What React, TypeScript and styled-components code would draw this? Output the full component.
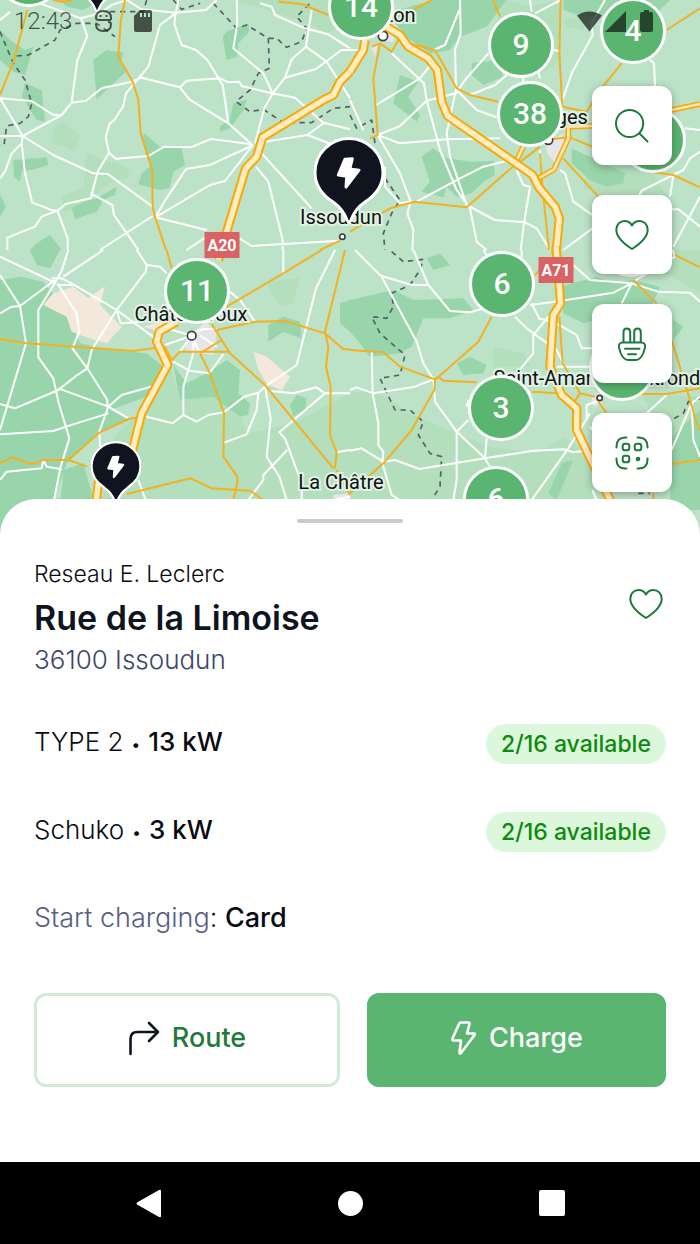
import React from "react";
import styled, { createGlobalStyle, css } from "styled-components";

const color = {
  ink: "#10141f",
  navy: "#3c4668",
  slate: "#56607f",
  green: "#5ab570",
  deepGreen: "#1f7a3a",
  paleGreen: "#d0ebd7",
  pill: "#dcf7dc",
  pillText: "#0d8a0d",
  land: "#bce3c7",
  forest: "#98d5ab",
  meadow: "#b3dfbc",
  sand: "#f4e8dc",
  town: "#e6e5ea",
  road: "#f9a905",
};

const GlobalStyle = createGlobalStyle`
  *, *::before, *::after { box-sizing: border-box; }
  body {
    margin: 0;
    background: #ffffff;
    color: #0a0b10;
    font-family: Inter, "Liberation Sans", sans-serif;
  }
  button {
    margin: 0;
    padding: 0;
    border: 0;
    background: none;
    font: inherit;
    color: inherit;
    cursor: pointer;
  }
  svg { display: block; }
`;

const Screen = styled.div`
  display: flex;
  flex-direction: column;
  min-height: 100vh;
`;

/* ---------- Map ---------- */

const MapArea = styled.section`
  position: relative;
  height: 539px;
  overflow: hidden;
  background: ${color.land};
  display: flex;
  justify-content: flex-end;
  align-items: flex-start;
  padding: 86px 28px 0;
`;

const Terrain = styled.svg`
  position: absolute;
  inset: 0;
  width: 100%;
  height: 100%;
`;

interface Spot {
  x: number;
  y: number;
}

const onMap = css<{ $x: number; $y: number }>`
  position: absolute;
  left: ${(p) => p.$x / 7}%;
  top: ${(p) => p.$y}px;
`;

const PlaceLabel = styled.span<{ $x: number; $y: number }>`
  ${onMap}
  transform: translate(-50%, -50%);
  font: 400 20px/24px Roboto, "Liberation Sans", sans-serif;
  white-space: nowrap;
  color: #111411;
  -webkit-text-stroke: 4px #e1f2e5;
  paint-order: stroke fill;
`;

const RoadBadge = styled.span<{ $x: number; $y: number }>`
  ${onMap}
  transform: translate(-50%, -50%);
  width: 35px;
  height: 26px;
  background: #d96264;
  color: #ffffff;
  font: 700 16px/27px Roboto, "Liberation Sans", sans-serif;
  text-align: center;
`;

const Cluster = styled.button<{ $x: number; $y: number }>`
  ${onMap}
  transform: translate(-50%, -50%);
  width: 66px;
  height: 66px;
  border: 3px solid #ffffff;
  border-radius: 50%;
  background: ${color.green};
  color: #ffffff;
  font: 500 30px/60px Roboto, "Liberation Sans", sans-serif;
  text-align: center;
`;

const PinButton = styled.button<{ $x: number; $y: number; $width: number }>`
  ${onMap}
  transform: translate(-50%, -100%);
  width: ${(p) => p.$width}px;
`;

const PinDrawing = styled.svg`
  width: 100%;
  height: auto;
`;

const clusters: (Spot & { count: string })[] = [
  { x: 29, y: -26, count: "" },
  { x: 361, y: 7, count: "14" },
  { x: 521, y: 45, count: "9" },
  { x: 530, y: 114, count: "38" },
  { x: 633, y: 31, count: "4" },
  { x: 653, y: 140, count: "" },
  { x: 631, y: 244, count: "" },
  { x: 622, y: 368, count: "" },
  { x: 197, y: 291, count: "11" },
  { x: 502, y: 284, count: "6" },
  { x: 501, y: 408, count: "3" },
  { x: 496, y: 499, count: "6" },
];

const places: (Spot & { name: string })[] = [
  { x: 382, y: 15, name: "Vierzon" },
  { x: 551, y: 117, name: "Bourges" },
  { x: 341, y: 217, name: "Issoudun" },
  { x: 191, y: 314, name: "Châteauroux" },
  { x: 597, y: 378, name: "Saint-Amand-Montrond" },
  { x: 341, y: 482, name: "La Châtre" },
];

const pins: (Spot & { width: number })[] = [
  { x: 97, y: 14, width: 51 },
  { x: 349, y: 226, width: 71 },
  { x: 116, y: 505, width: 51 },
];

/* The terrain is split in four tiles of 1050 x 750 units, three units per pixel. */
interface Tile {
  x: number;
  y: number;
  forest: string;
  meadow: string;
  sand?: string;
  town?: string;
  minor: string;
  major: string;
  motorway: string;
  link?: string;
  border: string;
}

const tiles: Tile[] = [
  {
    x: 0,
    y: 0,
    forest:
      "M0 90L30 120 75 150 100 140 75 225 40 215 0 180ZM75 250L125 270 135 365 110 360 65 290ZM280 180L320 150 370 158 362 190 383 210 290 298ZM680 95L745 70 748 95 715 130 712 170 680 180 668 110ZM700 310L740 300 730 330 690 385 660 395 660 380 690 355ZM432 400L480 440 545 445 555 495 520 515 508 565 480 570 415 553 425 520 450 500 425 420ZM40 480L140 472 145 495 95 510 65 512 60 545 42 530ZM215 625L250 605 290 595 350 560 345 585 310 600 290 635 225 658ZM0 585L18 620 0 650ZM110 730L150 705 185 750H90ZM180 0H300L250 30 200 20Z",
    meadow:
      "M160 380L190 362 240 410 225 455 190 440 155 430ZM260 460L380 500 390 530 330 550 260 600 190 640 185 590 250 560ZM700 0H1050V60L980 100 900 60Z",
    minor:
      "M0 295L95 303 160 345 185 345 215 308 258 302 305 265 395 245 425 233 540 262 560 242 660 235 685 247 718 245 725 258 815 280 885 293 970 368 1050 388M0 295L68 408 185 345M0 408H68L160 465 280 520 323 522 458 620M68 408L65 430 35 460 15 515 0 535M65 430L75 520 97 608 155 630 172 632 203 715V750M172 632L197 612 272 595 293 515 327 458 317 412 328 372 345 358 370 318 378 280 445 200 480 75 527 40M327 458L348 476 445 468 493 440 572 442 633 417 755 433M215 308L232 180 262 108 243 55 120 10M243 55L300 40 335 15 380 0M272 580L337 615 342 645 415 750M172 632L125 650 105 680 22 713V750M300 750L458 648M466 652L493 605 558 507 630 495 760 435M466 652L630 555 675 543 755 440M466 652L620 690M540 262L568 298 685 370 755 433M685 370L668 255 622 180 588 150 545 135 523 72 527 40 535 0M380 0L425 28 527 38 618 30 650 0M710 0L712 70 700 145 790 220 818 280 793 325 765 430M780 10L815 20 825 45 915 85 985 103 1050 145M935 30L918 140 875 178 855 233 818 280M855 233L948 207 1025 150H1050M918 140L980 185 1050 295M795 425L922 405 970 370M922 405L1000 435M785 460L935 625M768 500L805 545 848 720V750M718 715L755 738 1020 722M560 750L620 710M0 60L30 35",
    major:
      "M82 30L40 185 0 285M375 0L362 65 355 170 398 245 415 298 422 400 457 510 458 620 465 650 498 750M835 5L905 12 985 45M960 750L1020 722M160 0L185 5 220 0",
    motorway: "M1050 215L1020 245 1000 285 970 300 788 412 770 470 737 505 680 695 660 760",
    border:
      "M0 95L40 190 75 240 95 310 85 350 60 370 20 378 12 435H0M50 168L85 165 165 120 180 90 230 70H290L345 110M330 35H430L440 0M520 0L545 28 600 10M640 10L710 85 740 75 805 115 808 205 775 220 750 270 708 305 750 335 790 328 850 368 935 368 1000 325 1050 320M805 115L830 115 860 142 905 125 920 85 890 50 930 10",
  },
  {
    x: 1050,
    y: 0,
    forest:
      "M110 40L250 0H470L440 40 410 80 330 110 300 150 240 160 180 120ZM640 0H960L930 30 880 25 800 10 760 45 700 50 640 30ZM150 225L205 245 175 290 210 345 200 365 130 310ZM365 190L440 180 460 230 400 255 365 225ZM215 470L250 445 290 475 365 485 430 482 435 525 400 545 365 580 320 590 290 560 280 592 215 575 240 545ZM665 445L740 480 825 520 820 550 770 560 720 540 665 490Z",
    meadow:
      "M470 0L540 20 632 0V180L560 230 440 210 410 120ZM640 60L720 45 700 90 650 80ZM750 350L840 420 960 600 850 640 700 560Z",
    town: "M590 430L640 400 640 460 615 490 590 460ZM62 140L85 130 75 170ZM85 70L140 75 130 125 95 125Z",
    minor:
      "M330 0L332 100 315 150 318 268 290 400 300 470 350 615 435 660 525 667 560 685 600 750M250 150L285 135 328 30M125 160L222 250 230 300 270 450 320 570 360 625 380 725 410 750M78 315L210 235 250 185M83 405L150 378 230 302 318 280 345 240 415 160M318 268L380 330 440 352M360 285L435 255 470 225M83 405L150 430 290 418 450 415M83 405L150 520 182 605 172 640 190 690 187 750M200 605L330 535 400 500 500 475M0 150H45M540 0L545 35M555 40L632 0M637 300L665 220 728 105 725 70 765 0M610 150L628 153M900 180L912 190 915 258M570 235L565 215M570 450L572 495M630 510L645 520 670 605 727 645M500 510L520 555 540 560 522 670 512 750M640 750L727 685M1050 455L1020 475 1000 510 970 525 875 572 865 590M970 525L960 590M1050 390L1005 385M965 628H985L1050 680M1050 590L970 740M0 300L40 390M105 500V560L150 610 182 605M520 235V250",
    major:
      "M65 140L90 130 70 235 83 405 60 415M150 110L125 155 90 130M175 130L255 150 320 265 360 285 445 305M190 30L245 0M430 0L450 50M632 0L628 160 637 320 710 335 760 258 815 190M660 412L727 440M570 460L578 570 597 750M640 475L745 590M505 490L570 440M500 490L350 622 195 605 120 625 0 695M950 90L1050 25M900 515L970 525 1050 562M590 420L650 412",
    motorway:
      "M45 120L40 150 0 215M110 80L150 105 175 140 235 175 262 210 275 305 293 348 548 525 565 560 615 620 628 655 618 760",
    link: "M500 480L520 440M565 535L612 508 655 415V380L727 378M965 330L1050 312",
    border: "M0 345L20 385 65 360 75 430M105 535L150 600 125 640 100 700 105 750",
  },
  {
    x: 0,
    y: 750,
    forest:
      "M90 0H180L150 55 110 45ZM0 90L60 80 130 95 200 180 240 280 330 300 440 310 490 350 440 440 330 480 390 510 300 545 200 640 150 780H0ZM190 660L250 640 290 780H180ZM520 345L560 400 620 370 680 330 720 360 715 430 750 460 745 495 720 500 640 440 540 450ZM805 225L850 200 900 215 905 265 850 245 805 275ZM870 465L890 435 920 445 915 480 880 500ZM1020 160L1050 150V245L1020 220Z",
    meadow:
      "M510 345L540 450 640 440 720 500 740 550 880 520 1050 430V780H300L340 560 430 480ZM800 100L900 80 880 160 840 170Z",
    sand: "M160 130L220 110 265 145 315 108 300 165 365 232 320 280 260 262 215 245 200 200 130 165ZM760 305L800 320 870 380 845 422 800 400 775 360ZM430 230L480 215 520 215 480 245Z",
    town: "M560 260L620 215 650 250 640 315 600 310 555 300ZM1000 735L1050 730V760H1000Z",
    minor:
      "M0 20L165 98 185 62 205 0M165 90L60 168 35 170 0 190M0 75L60 168 78 280 0 540M155 85H185L220 103 350 180 462 262M172 105H220M190 80L310 0M410 0L440 45 437 65 350 180 362 220 430 215M440 45L480 50 500 70M172 100L230 190 238 245 217 295 262 355 322 450V470M165 98L115 180V322L160 385 175 455 208 565 182 650 162 750M262 355L275 300 350 180M262 355L225 380 175 420 45 475 0 462M175 415L325 470 385 505M325 470L365 435 460 408M325 490L198 530 160 543 0 553M325 470L298 545 300 590M0 690L20 665 125 655 130 630 140 650 185 658M415 690L437 750M440 500L518 520 550 495 590 515 625 495 672 487 732 440 775 428 795 410 890 345 948 115 1005 0M550 495V410L565 360 580 310V270M520 335L568 362 628 370 670 312M775 428L770 480 740 553 672 578M795 410L812 505 800 620 838 680 860 750M805 422L880 430 950 412 975 430H1050M975 430L838 547 855 565 905 700V750M862 600L790 675V690L745 750M1050 600L1010 607M850 0V75M690 125L720 150 765 215M575 257L500 235M575 257L495 285M575 257L540 305M575 257L600 310M600 257L650 290M590 245L610 237H650M1010 747L1050 740",
    major:
      "M0 267L80 280 400 303 470 293 495 290 515 330 540 305H690M500 0L515 55M0 640L35 622 95 642 130 630H205L300 547 385 507 410 503M205 630L262 650M680 170L850 70 965 0M650 240L765 215 855 213 975 250 1030 298H1050M1035 0L975 245 985 290 978 350 992 410 990 555 1010 607 1005 655M635 222L665 270 690 310 795 405 1000 655M600 310L665 270M600 310L630 370 672 490 670 620 712 680V700L700 750M380 732L572 685 635 715 750 722 790 750M1010 660L1050 735",
    motorway: "M665 0L655 30M530 215L478 245 470 275 503 345 425 490 395 610M300 660L285 780",
    border: "",
  },
  {
    x: 1050,
    y: 750,
    forest:
      "M0 150L130 120 190 150 340 145 370 180 300 205 220 205 185 290 150 310 60 320 30 280 0 245ZM630 110L740 80 790 100 850 90 930 110 900 180 830 215 780 200 700 220 640 190ZM320 340L360 320 410 345 400 370 340 375ZM635 640L670 630 620 750 595 730ZM965 560L1050 480V780H960ZM230 25L270 10 300 45 250 60ZM970 210L1000 230 970 270Z",
    meadow:
      "M0 430L70 420 200 500 320 550 420 590 560 610 640 560 727 620V780H0ZM740 0H1050V130L930 60ZM430 290L520 310 545 350 430 350ZM870 430L1050 440V560L960 570Z",
    town: "M725 440L760 425 755 460 730 470Z",
    minor:
      "M15 0L95 80 200 275 220 340 250 388 195 410 70 430 20 412 0 420M65 303L68 430 85 520V585L100 605 97 640 125 735 150 750M95 78L185 105H235M190 0L235 105 300 183 360 187 400 175M250 388L255 455 320 545 405 625 550 602 645 598 670 607 725 600M0 602L35 595 100 635 135 630 208 657 405 625M320 545L355 510M320 545V690L310 750M405 625L410 565M405 625L420 650M350 470L355 450M545 750L655 595 720 490M495 200L530 235 620 300 640 340M565 205L610 215 680 255 695 295H727M540 165L615 155 790 128 845 100 925 125 1020 128 1050 155M545 160L570 210M845 100L815 160M845 100L720 90 670 45M550 310V255L595 200M550 310L500 370M620 350H720M400 0L410 15M515 0V20M968 0L975 20 850 95M950 435L890 490M1050 440L1025 460 965 600M1025 460L1030 570 1050 620M710 510V465L750 450M740 750L727 720M720 530L727 540",
    major:
      "M425 200L385 275 255 390 253 420 185 540 105 635 0 730M0 300L100 307 150 350 255 388 265 380 280 392 380 397M545 425L620 430M570 60L555 75M628 200L638 340 690 430 735 440M670 460L690 430M745 455L770 490M975 15L1050 52M850 90L920 160M965 270L1020 450 1040 520 1050 540M860 432H950L1050 415M965 642L1050 630M910 730V750",
    motorway: "M618 -10L632 160 610 195 600 350 635 435 680 475V540L790 770",
    border:
      "M125 5L160 35 220 28 210 60 180 105 125 130 130 170 110 205 65 200 90 250 165 315 150 375 90 385 135 480 180 480 220 515 205 555 240 610 275 620 270 710 245 750M1050 445L1015 455 1000 490 965 510M865 730H900",
  },
];

const townMarks: { x: number; y: number; r: number }[] = [
  { x: 575, y: 1007, r: 13 },
  { x: 1027, y: 710, r: 8 },
  { x: 1799, y: 1194, r: 8 },
  { x: 1149, y: 108, r: 14 },
  { x: 1645, y: 420, r: 13 },
];

const MapTerrain = () => (
  <Terrain viewBox="0 0 2100 1617" preserveAspectRatio="none" aria-hidden="true">
    {tiles.map((t) => (
      <g key={`land-${t.x}-${t.y}`} transform={`translate(${t.x} ${t.y})`}>
        <path d={t.meadow} fill={color.meadow} />
        <path d={t.forest} fill={color.forest} />
        {t.sand && <path d={t.sand} fill={color.sand} />}
        {t.town && <path d={t.town} fill={color.town} />}
      </g>
    ))}
    <rect x="0" y="1495" width="300" height="122" fill={color.forest} />
    {tiles.map((t) => (
      <g
        key={`road-${t.x}-${t.y}`}
        transform={`translate(${t.x} ${t.y})`}
        fill="none"
        strokeLinejoin="round"
      >
        <path d={t.border} stroke="#566069" strokeWidth="5" strokeDasharray="16 14" />
        <path d={t.minor} stroke="#ffffff" strokeWidth="6" />
        <path d={t.major} stroke="#f3b020" strokeWidth="6" />
        {t.link && <path d={t.link} stroke={color.road} strokeWidth="17" />}
        {t.link && <path d={t.link} stroke="#ffe6b0" strokeWidth="8" />}
        <path d={t.motorway} stroke={color.road} strokeWidth="28" />
        <path d={t.motorway} stroke="#ffecc0" strokeWidth="16" />
      </g>
    ))}
    {townMarks.map((m) => (
      <circle
        key={`${m.x}-${m.y}`}
        cx={m.x}
        cy={m.y}
        r={m.r}
        fill="#ffffff"
        stroke="#3a3d3b"
        strokeWidth="5"
      />
    ))}
  </Terrain>
);

const Pin = ({ x, y, width }: Spot & { width: number }) => (
  <PinButton $x={x} $y={y} $width={width} aria-label="Charging station">
    <PinDrawing viewBox="0 0 71 89">
      <path
        d="M35.500 1.500a34 34 0 0 1 34 34c0 14-8 23-18 29.500C45 69.500 40 76 37.500 83c-1 2.500-3 2.500-4 0C31 76 26 69.500 19.500 65c-10-6.500-18-15.500-18-29.500a34 34 0 0 1 34-34z"
        fill={color.ink}
        stroke="#ffffff"
        strokeWidth="3"
      />
      <path
        d="M31.500 22.200L38.800 21.800 36.300 32 45.500 33.200 32.500 50 33.200 39.300 24.800 38Z"
        fill="#ffffff"
        stroke="#ffffff"
        strokeWidth="3"
        strokeLinejoin="round"
      />
    </PinDrawing>
  </PinButton>
);

/* ---------- Status bar ---------- */

const StatusBar = styled.header`
  position: absolute;
  top: 0;
  left: 0;
  right: 0;
  height: 42px;
  padding: 0 47px 0 14px;
  display: flex;
  align-items: center;
  justify-content: space-between;
  color: #101612;
  opacity: 0.7;
  pointer-events: none;
`;

const StatusGroup = styled.div<{ $gap: number }>`
  display: flex;
  align-items: center;
  gap: ${(p) => p.$gap}px;
`;

const Clock = styled.time`
  font: 300 24px/28px Roboto, "Liberation Sans", sans-serif;
`;

/* ---------- Floating buttons ---------- */

const ToolColumn = styled.nav`
  position: relative;
  display: flex;
  flex-direction: column;
  gap: 30px;
`;

const ToolButton = styled.button`
  width: 80px;
  height: 79px;
  display: grid;
  place-items: center;
  border-radius: 12px;
  background: #ffffff;
  color: ${color.deepGreen};
  box-shadow: 0 2px 8px rgba(0, 0, 0, 0.3);
`;

const LineIcon = styled.svg`
  fill: none;
  stroke: currentColor;
  stroke-width: 2;
  stroke-linecap: round;
  stroke-linejoin: round;
`;

const HeartIcon = () => (
  <LineIcon width="36" height="36" viewBox="0 0 36 36">
    <path d="M18 32C8 25.500 2.300 19.500 2.300 12.700 2.300 7.500 6 4 10.600 4 13.700 4 16.200 5.200 18 8.400 19.800 5.200 22.300 4 25.400 4 30 4 33.700 7.500 33.700 12.700 33.700 19.500 28 25.500 18 32Z" />
  </LineIcon>
);

const SearchIcon = () => (
  <LineIcon width="36" height="36" viewBox="0 0 36 36">
    <circle cx="15.600" cy="15.500" r="13.600" />
    <path d="M25.500 25.500L33.500 33.500" />
  </LineIcon>
);

const PlugIcon = () => (
  <LineIcon width="36" height="36" viewBox="0 0 36 36">
    <path d="M9.500 16V6Q9.500 2.500 12.800 2.500T16.200 6V16M20.200 16V6Q20.200 2.500 23.500 2.500T26.800 6V16" />
    <path d="M8.500 16.500H27.500Q31.800 17 31 21.500L29.300 27Q26.500 34 21.500 34H14.500Q9.500 34 6.700 27L5 21.500Q4.200 17 8.500 16.500ZM11 22.800H25.500M14 28.200H22" />
  </LineIcon>
);

const ScanIcon = () => (
  <LineIcon width="36" height="36" viewBox="0 0 36 36">
    <path d="M2.500 12.500V11.500Q2.500 2.500 11.500 2.500H12.500M23.500 2.500H24.500Q33.500 2.500 33.500 11.500V12.500M33.500 23.500V24.500Q33.500 33.500 24.500 33.500H23.500M12.500 33.500H11.500Q2.500 33.500 2.500 24.500V23.500" />
    <rect x="8.700" y="8.700" width="6.600" height="6.600" rx="2.400" />
    <rect x="20.700" y="8.700" width="6.600" height="6.600" rx="2.400" />
    <rect x="8.700" y="20.700" width="6.600" height="6.600" rx="2.400" />
    <circle cx="24" cy="24" r="1.300" fill="currentColor" />
  </LineIcon>
);

/* ---------- Station sheet ---------- */

const Sheet = styled.main`
  position: relative;
  flex: 1;
  margin-top: -40px;
  padding: 20px 34px 75px;
  border-radius: 36px 36px 0 0;
  background: #ffffff;
`;

const Handle = styled.div`
  width: 106px;
  height: 4px;
  margin: 0 auto 33px;
  border-radius: 2px;
  background: #cbcbcb;
`;

const StationHeader = styled.div`
  display: flex;
  justify-content: space-between;
  align-items: flex-start;
  margin-bottom: 48px;
`;

const Operator = styled.p`
  margin: 0;
  font-size: 23px;
  line-height: 36px;
  font-weight: 300;
`;

const StationName = styled.h1`
  margin: 0;
  font-size: 34px;
  line-height: 52px;
  font-weight: 600;
  color: ${color.ink};
`;

const City = styled.p`
  margin: 0;
  font-size: 26px;
  line-height: 32px;
  font-weight: 300;
  color: ${color.navy};
`;

const FavouriteButton = styled.button`
  margin: 30px 2px 0 0;
  color: ${color.deepGreen};
`;

const ConnectorList = styled.ul`
  margin: 0 0 48px;
  padding: 0;
  list-style: none;
  display: grid;
  gap: 48px;
`;

const ConnectorRow = styled.li`
  display: flex;
  justify-content: space-between;
  align-items: flex-start;
`;

const DetailText = styled.p`
  margin: 0;
  font-size: 26px;
  line-height: 36px;
  font-weight: 300;

  strong {
    font-weight: 500;
  }
`;

const PaymentText = styled(DetailText)`
  font-size: 27px;
`;

const Bullet = styled.span`
  font-size: 18px;
`;

const Muted = styled.span`
  color: ${color.slate};
`;

const Availability = styled.span`
  min-width: 180px;
  height: 40px;
  padding: 0 8px;
  border-radius: 20px;
  background: ${color.pill};
  color: ${color.pillText};
  font-size: 23px;
  line-height: 40px;
  font-weight: 500;
  text-align: center;
`;

const Actions = styled.div`
  display: grid;
  grid-template-columns: 306fr 299fr;
  gap: 27px;
  margin-top: 57px;
`;

const ActionButton = styled.button<{ $primary?: boolean }>`
  height: 94px;
  display: flex;
  align-items: center;
  justify-content: center;
  gap: 12px;
  padding-bottom: 4px;
  border-radius: 12px;
  border: 3px solid ${(p) => (p.$primary ? color.green : color.paleGreen)};
  background: ${(p) => (p.$primary ? color.green : "#ffffff")};
  color: ${(p) => (p.$primary ? "#ffffff" : color.deepGreen)};
  font-size: 27px;
  line-height: 32px;
  font-weight: 500;
`;

const ActionIcon = styled(LineIcon)<{ $ink: string }>`
  stroke: ${(p) => p.$ink};
  stroke-width: 2.6;
`;

/* ---------- System navigation ---------- */

const SystemNav = styled.footer`
  height: 82px;
  display: flex;
  align-items: center;
  justify-content: center;
  gap: 154px;
  background: #000000;
`;

const SystemButton = styled.button`
  width: 48px;
  height: 48px;
  display: grid;
  place-items: center;
`;

const connectors = [
  { type: "TYPE 2", power: "13 kW", available: "2/16 available" },
  { type: "Schuko", power: "3 kW", available: "2/16 available" },
];

export default function App() {
  return (
    <Screen>
      <GlobalStyle />
      <MapArea aria-label="Map">
        <MapTerrain />
        {places.map((p) => (
          <PlaceLabel key={p.name} $x={p.x} $y={p.y}>
            {p.name}
          </PlaceLabel>
        ))}
        <RoadBadge $x={222} $y={245}>
          A20
        </RoadBadge>
        <RoadBadge $x={556} $y={270}>
          A71
        </RoadBadge>
        {clusters.map((c) => (
          <Cluster key={`${c.x}-${c.y}`} $x={c.x} $y={c.y} aria-label="Station group">
            {c.count}
          </Cluster>
        ))}
        {pins.map((p) => (
          <Pin key={p.x} {...p} />
        ))}
        <StatusBar>
          <StatusGroup $gap={20}>
            <Clock>12:43</Clock>
            <svg width="22" height="24" viewBox="0 0 22 24" fill="none" stroke="currentColor" strokeWidth="2">
              <path d="M19 11V9Q19 2 11.500 2T4 9Q4 11 7 11H19M4 15Q4 22 11.500 22T19 15Q19 13 16 13" />
              <path d="M8.500 6V8M14.500 6V8" />
            </svg>
            <svg width="18" height="22" viewBox="0 0 18 22">
              <path
                d="M6 0H16Q18 0 18 2V20Q18 22 16 22H2Q0 22 0 20V6ZM6 3V7H8V3ZM10 3V7H12V3ZM14 3V7H16V3Z"
                fill="currentColor"
                fillRule="evenodd"
              />
            </svg>
          </StatusGroup>
          <StatusGroup $gap={3}>
            <svg width="25" height="21" viewBox="0 0 25 20" fill="currentColor">
              <path d="M0 4Q12.500-4 25 4L12.500 20Z" />
            </svg>
            <svg width="21" height="21" viewBox="0 0 21 21" fill="currentColor">
              <path d="M21 0V21H0Z" />
            </svg>
            <svg width="24" height="22" viewBox="0 0 24 22" fill="currentColor">
              <path d="M13 2H15V0H20V2H22Q24 2 24 4V20Q24 22 22 22H13Q11 22 11 20V4Q11 2 13 2Z" />
            </svg>
          </StatusGroup>
        </StatusBar>
        <ToolColumn aria-label="Map tools">
          <ToolButton aria-label="Search">
            <SearchIcon />
          </ToolButton>
          <ToolButton aria-label="Favourites">
            <HeartIcon />
          </ToolButton>
          <ToolButton aria-label="Connectors">
            <PlugIcon />
          </ToolButton>
          <ToolButton aria-label="Scan code">
            <ScanIcon />
          </ToolButton>
        </ToolColumn>
      </MapArea>

      <Sheet>
        <Handle />
        <StationHeader>
          <div>
            <Operator>Reseau E. Leclerc</Operator>
            <StationName>Rue de la Limoise</StationName>
            <City>36100 Issoudun</City>
          </div>
          <FavouriteButton aria-label="Add to favourites">
            <HeartIcon />
          </FavouriteButton>
        </StationHeader>
        <ConnectorList>
          {connectors.map((c) => (
            <ConnectorRow key={c.type}>
              <DetailText>
                {c.type} <Bullet>•</Bullet> <strong>{c.power}</strong>
              </DetailText>
              <Availability>{c.available}</Availability>
            </ConnectorRow>
          ))}
        </ConnectorList>
        <PaymentText>
          <Muted>Start charging</Muted>: <strong>Card</strong>
        </PaymentText>
        <Actions>
          <ActionButton>
            <ActionIcon $ink={color.ink} width="32" height="36" viewBox="0 0 32 36">
              <path d="M2.500 34V19Q2.500 12 9.500 12H30M21 3L30 12 21 21" />
            </ActionIcon>
            Route
          </ActionButton>
          <ActionButton $primary>
            <ActionIcon $ink="#ffffff" width="27" height="36" viewBox="0 0 27 36">
              <path d="M11 2.500H18.500Q20 2.500 19.500 4L17 13.500H24Q25.500 13.500 24.500 15L11 33Q9.500 34.500 9.500 32.500L11 20.500H3.500Q1.800 20.500 2.500 18.500L9 4Q9.500 2.500 11 2.500Z" />
            </ActionIcon>
            Charge
          </ActionButton>
        </Actions>
      </Sheet>

      <SystemNav>
        <SystemButton aria-label="Back">
          <svg width="25" height="29" viewBox="0 0 25 29" fill="#ffffff">
            <path d="M23 1Q25 0 25 2V27Q25 29 23 28L1 15.500Q0 14.500 1 13.500Z" />
          </svg>
        </SystemButton>
        <SystemButton aria-label="Home">
          <svg width="25" height="25" viewBox="0 0 25 25" fill="#ffffff">
            <circle cx="12.500" cy="12.500" r="12.500" />
          </svg>
        </SystemButton>
        <SystemButton aria-label="Recent apps">
          <svg width="26" height="26" viewBox="0 0 26 26" fill="#ffffff">
            <rect width="26" height="26" rx="2" />
          </svg>
        </SystemButton>
      </SystemNav>
    </Screen>
  );
}
